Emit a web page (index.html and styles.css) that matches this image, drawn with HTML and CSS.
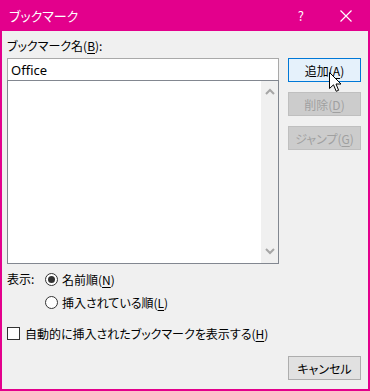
FILE: index.html
```html
<!DOCTYPE html>
<html lang="ja">
  <head>
    <meta charset="UTF-8" />
    <title>ブックマーク</title>
    <link rel="stylesheet" href="styles.css">
  </head>
  <body>
    <div class="dialog">
      <header class="titlebar">
        <span class="title">ブックマーク</span>
        <span class="help">?</span>
        <svg class="close" width="12" height="12" viewBox="0 0 12 12">
          <path d="M0.5 0.5 L11.5 11.5 M11.5 0.5 L0.5 11.5" stroke="#fff" stroke-width="1.2" fill="none" />
        </svg>
      </header>

      <div class="dialog-body">
        <section class="left">
          <label class="label">ブックマーク名(<u>B</u>):</label>
          <input class="name" type="text" value="Office" />
          <div class="listbox">
            <div class="list"></div>
            <div class="scroll">
              <svg width="10" height="7" viewBox="0 0 10 7"><path d="M1 6 L5 2 L9 6" stroke="#a6a6a6" stroke-width="2" fill="none" /></svg>
              <svg width="10" height="7" viewBox="0 0 10 7"><path d="M1 1 L5 5 L9 1" stroke="#a6a6a6" stroke-width="2" fill="none" /></svg>
            </div>
          </div>

          <div class="sort">
            <span class="sort-label">表示:</span>
            <div class="radios">
              <div class="radio-row"><span class="radio checked"></span><span>名前順(<u>N</u>)</span></div>
              <div class="radio-row"><span class="radio"></span><span>挿入されている順(<u>L</u>)</span></div>
            </div>
          </div>
        </section>

        <aside class="right">
          <button class="btn primary">追加(<u>A</u>)</button>
          <button class="btn disabled">削除(<u>D</u>)</button>
          <button class="btn disabled">ジャンプ(<u>G</u>)</button>
        </aside>
      </div>

      <div class="check-row"><span class="checkbox"></span><span>自動的に挿入されたブックマークを表示する(<u>H</u>)</span></div>

      <footer class="footer">
        <button class="btn">キャンセル</button>
      </footer>

      <svg class="cursor" width="13" height="21" viewBox="0 0 13 21">
        <path d="M0.5 0.5 L0.5 16.5 L4.5 12.8 L7.2 19.3 L9.6 18.3 L7 12 L12 12 Z" fill="#fff" stroke="#000" stroke-width="1" stroke-linejoin="miter" />
      </svg>
    </div>
  </body>
</html>
```

FILE: styles.css
```css
:root {
  --pink: #e3008c;
  --face: #f0f0f0;
  --text: #000000;
  --grey: #a0a0a0;
}
* {
  margin: 0;
  padding: 0;
  box-sizing: border-box;
  font-family: "Noto Sans CJK JP", "Noto Sans", sans-serif;
  font-feature-settings: "palt";
}
body {
  width: 370px;
  height: 391px;
  overflow: hidden;
}
.dialog {
  position: relative;
  width: 370px;
  height: 391px;
  background-color: var(--face);
  border: 2px solid var(--pink);
  border-top: none;
  font-size: 12px;
  color: var(--text);
}
u {
  text-underline-offset: 2px;
}

.titlebar {
  display: flex;
  align-items: center;
  height: 31px;
  margin: 0 -2px;
  padding-left: 9px;
  background-color: var(--pink);
  color: #ffffff;
}
.title {
  flex: 1;
  font-size: 13px;
}
.help {
  font-size: 13px;
  margin-right: 36px;
}
.close {
  margin-right: 18px;
}

.dialog-body {
  display: flex;
  gap: 9px;
  padding: 6px 0 0 5px;
}
.left {
  width: 272px;
}
.label {
  display: block;
  height: 18px;
  line-height: 18px;
  margin-bottom: 3px;
}
.name {
  display: block;
  width: 272px;
  height: 22px;
  padding: 0 3px;
  border: 1px solid #a9a9a9;
  border-bottom: none;
  outline: none;
  font-size: 13px;
  background-color: #ffffff;
  font-family: "Noto Sans", sans-serif;
}
.listbox {
  display: flex;
  height: 184px;
  border: 1px solid #828790;
  background-color: #ffffff;
}
.list {
  flex: 1;
}
.scroll {
  width: 17px;
  display: flex;
  flex-direction: column;
  justify-content: space-between;
  align-items: center;
  padding: 7px 0 8px;
  background-color: var(--face);
}

.sort {
  display: flex;
  margin-top: 6px;
}
.sort-label {
  width: 38px;
  line-height: 18px;
}
.radios {
  display: flex;
  flex-direction: column;
  gap: 5px;
}
.radio-row {
  display: flex;
  align-items: center;
  gap: 4px;
  height: 18px;
}
.radio {
  display: flex;
  align-items: center;
  justify-content: center;
  width: 13px;
  height: 13px;
  border: 1px solid #333333;
  border-radius: 50%;
  background-color: #ffffff;
}
.radio.checked::after {
  content: "";
  width: 7px;
  height: 7px;
  border-radius: 50%;
  background-color: #333333;
}

.right {
  display: flex;
  flex-direction: column;
  gap: 10px;
  padding-top: 21px;
}
.btn {
  width: 73px;
  height: 24px;
  border: 1px solid #adadad;
  background-color: #e1e1e1;
  font-size: 12px;
  color: var(--text);
}
.btn.primary {
  border-color: #0078d7;
  background-color: #e5f1fb;
}
.btn.disabled {
  border-color: #bfbfbf;
  background-color: #cccccc;
  color: var(--grey);
}

.check-row {
  display: flex;
  align-items: center;
  gap: 5px;
  height: 18px;
  margin: 13px 0 0 5px;
}
.checkbox {
  width: 13px;
  height: 13px;
  border: 1px solid #333333;
  background-color: #ffffff;
}

.footer {
  display: flex;
  justify-content: flex-end;
  padding: 14px 7px 0 0;
}

.cursor {
  position: absolute;
  left: 327px;
  top: 72px;
}
```
